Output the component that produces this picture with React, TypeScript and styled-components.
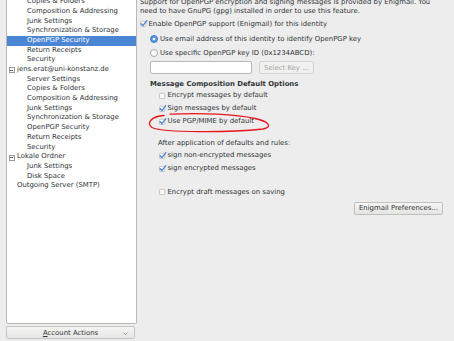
import React from "react";
import styled, { createGlobalStyle } from "styled-components";

const GlobalStyle = createGlobalStyle`
	html, body {
		margin: 0;
		padding: 0;
		background: #ededed;
	}
	body {
		font-family: "DejaVu Sans", "Liberation Sans", sans-serif;
		font-size: 6.9px;
		color: #2e3436;
	}
`;

type Node = { label: string; level: number; selected?: boolean; expander?: boolean };

const tree: Node[] = [
	{ label: "Copies & Folders", level: 1 },
	{ label: "Composition & Addressing", level: 1 },
	{ label: "Junk Settings", level: 1 },
	{ label: "Synchronization & Storage", level: 1 },
	{ label: "OpenPGP Security", level: 1, selected: true },
	{ label: "Return Receipts", level: 1 },
	{ label: "Security", level: 1 },
	{ label: "jens.erat@uni-konstanz.de", level: 0, expander: true },
	{ label: "Server Settings", level: 1 },
	{ label: "Copies & Folders", level: 1 },
	{ label: "Composition & Addressing", level: 1 },
	{ label: "Junk Settings", level: 1 },
	{ label: "Synchronization & Storage", level: 1 },
	{ label: "OpenPGP Security", level: 1 },
	{ label: "Return Receipts", level: 1 },
	{ label: "Security", level: 1 },
	{ label: "Lokale Ordner", level: 0, expander: true },
	{ label: "Junk Settings", level: 1 },
	{ label: "Disk Space", level: 1 },
	{ label: "Outgoing Server (SMTP)", level: 0 },
];

const App = () => {
	return (
		<>
			<GlobalStyle />
			<Window>
				<Sidebar>
					<TreeBox>
						<TreeList>
							{tree.map((n, i) => (
								<TreeRow key={i} $level={n.level} $selected={!!n.selected}>
									{n.expander && <Expander />}
									{n.label}
								</TreeRow>
							))}
						</TreeList>
					</TreeBox>
					<ActionsButton>
						<span>
							<u>A</u>ccount Actions
						</span>
						<Chevron viewBox='0 0 6 4'>
							<path d='M0.8 0.8 L3 3 L5.2 0.8' />
						</Chevron>
					</ActionsButton>
				</Sidebar>

				<Content>
					<Para>
						Support for OpenPGP encryption and signing messages is provided by Enigmail. You
						<br />
						need to have GnuPG (gpg) installed in order to use this feature.
					</Para>

					<Option $top={2.5} $indent={0}>
						<CheckBox checked />
						Enable OpenPGP support (Enigmail) for this identity
					</Option>

					<Option $top={4.5} $indent={10}>
						<Radio $on />
						Use email address of this identity to identify OpenPGP key
					</Option>
					<Option $top={2.5} $indent={10}>
						<Radio />
						Use specific OpenPGP key ID (0x1234ABCD):
					</Option>

					<KeyRow>
						<KeyInput />
						<PushButton $disabled>Select Key ...</PushButton>
					</KeyRow>

					<Heading>Message Composition Default Options</Heading>

					<Option $top={0} $indent={19}>
						<CheckBox />
						Encrypt messages by default
					</Option>
					<Option $top={2} $indent={19}>
						<CheckBox checked />
						Sign messages by default
					</Option>
					<Option $top={2} $indent={19}>
						<CheckBox checked />
						Use PGP/MIME by default
					</Option>

					<Option $top={11} $indent={18}>
						After application of defaults and rules:
					</Option>
					<Option $top={1} $indent={19}>
						<CheckBox checked />
						sign non-encrypted messages
					</Option>
					<Option $top={2} $indent={19}>
						<CheckBox checked />
						sign encrypted messages
					</Option>

					<Option $top={12.5} $indent={19}>
						<CheckBox />
						Encrypt draft messages on saving
					</Option>

					<ButtonRow>
						<PushButton>Enigmail Preferences...</PushButton>
					</ButtonRow>

					{/* red hand-drawn annotation around the PGP/MIME option */}
					<Scribble viewBox='0 0 135 28'>
						<path d='M24 7.5 C11 8.5, 6 15, 12 19.5 C24 25, 90 24.5, 123 21 C133 19, 129 13.5, 115 10.5 C96 6.5, 62 4.5, 30 6.2' />
					</Scribble>
				</Content>
			</Window>
		</>
	);
};

const CheckBox = ({ checked }: { checked?: boolean }) => (
	<Box viewBox='0 0 9 8'>
		<rect x='0.5' y='1.5' width='6' height='6' rx='1' />
		{checked && <path d='M1.3 4.3 L3.2 6.4 L7.8 0.8' />}
	</Box>
);

export default App;

const Window = styled.div`
	display: flex;
	width: 454px;
	height: 341px;
	overflow: hidden;
	background: #ededed;
`;

const Sidebar = styled.div`
	width: 137px;
	flex: none;
	padding: 0 0 2px 6px;
	box-sizing: border-box;
	display: flex;
	flex-direction: column;
`;

const TreeBox = styled.div`
	flex: 1;
	background: #fff;
	border: 1px solid #b9b9b6;
	border-top: none;
	border-radius: 0 0 2px 2px;
	overflow: hidden;
`;

const TreeList = styled.div`
	margin-top: -2.8px;
`;

const TreeRow = styled.div<{ $level: number; $selected: boolean }>`
	height: 9.7px;
	line-height: 9.7px;
	display: flex;
	align-items: center;
	white-space: nowrap;
	padding-left: ${(p) => (p.$level === 0 ? 10 : 20)}px;
	background: ${(p) => (p.$selected ? "#4a86d4" : "transparent")};
	color: ${(p) => (p.$selected ? "#fff" : "#2e3436")};
	position: relative;
`;

const Expander = styled.span`
	position: absolute;
	left: 1.5px;
	top: 2.3px;
	width: 4px;
	height: 4px;
	border: 0.8px solid #9a9a9a;
	&::after {
		content: "";
		position: absolute;
		left: 0.8px;
		right: 0.8px;
		top: 1.6px;
		height: 0.8px;
		background: #666;
	}
`;

const ActionsButton = styled.div`
	margin-top: 2px;
	height: 13px;
	width: 129px;
	box-sizing: border-box;
	border: 1px solid #c3c3c0;
	border-radius: 2px;
	background: linear-gradient(#f4f4f3, #e6e6e4);
	display: flex;
	align-items: center;
	justify-content: center;
	position: relative;
	color: #2e3436;
	u {
		text-decoration-thickness: 0.6px;
		text-underline-offset: 1px;
	}
`;

const Chevron = styled.svg`
	position: absolute;
	right: 6px;
	top: 4.5px;
	width: 5px;
	height: 3.5px;
	path {
		fill: none;
		stroke: #777;
		stroke-width: 0.9;
	}
`;

const Content = styled.div`
	flex: 1;
	padding-left: 3px;
	position: relative;
	display: flex;
	flex-direction: column;
`;

const Para = styled.div`
	margin-top: -2.5px;
	line-height: 9px;
	white-space: nowrap;
`;

const Option = styled.div<{ $top: number; $indent: number }>`
	margin-top: ${(p) => p.$top}px;
	margin-left: ${(p) => p.$indent}px;
	height: 11px;
	display: flex;
	align-items: center;
	white-space: nowrap;
`;

const Box = styled.svg`
	width: 8px;
	height: 7px;
	margin-right: 0.5px;
	flex: none;
	rect {
		fill: #fafafa;
		stroke: #a9a9a7;
		stroke-width: 0.7;
	}
	path {
		fill: none;
		stroke: #3c7fd8;
		stroke-width: 1.4;
		stroke-linecap: round;
		stroke-linejoin: round;
	}
`;

const Radio = styled.span<{ $on?: boolean }>`
	width: 6px;
	height: 6px;
	border-radius: 50%;
	flex: none;
	margin-right: 2px;
	border: 0.7px solid ${(p) => (p.$on ? "#3a78c9" : "#a9a9a7")};
	background: ${(p) =>
		p.$on
			? "radial-gradient(circle at 50% 50%, #ffffff 0 1.1px, #6aa3e6 1.6px, #3a7ad2 100%)"
			: "#fafafa"};
`;

const KeyRow = styled.div`
	margin-top: 3px;
	margin-left: 10px;
	height: 13px;
	display: flex;
	gap: 7px;
`;

const KeyInput = styled.div`
	width: 102px;
	box-sizing: border-box;
	border: 1px solid #b8b8b5;
	border-radius: 2px;
	background: #fff;
`;

const PushButton = styled.div<{ $disabled?: boolean }>`
	box-sizing: border-box;
	height: 13px;
	padding: 0 4px;
	display: flex;
	align-items: center;
	justify-content: center;
	white-space: nowrap;
	border: 1px solid ${(p) => (p.$disabled ? "#d3d3d0" : "#c0c0bd")};
	border-radius: 2px;
	background: ${(p) => (p.$disabled ? "#f0f0ef" : "linear-gradient(#f6f6f5, #e4e4e2)")};
	color: ${(p) => (p.$disabled ? "#a5a7a5" : "#2e3436")};
`;

const Heading = styled.div`
	margin-top: 4.5px;
	margin-left: 10px;
	height: 11px;
	line-height: 11px;
	font-weight: bold;
	white-space: nowrap;
`;

const ButtonRow = styled.div`
	margin-top: 5px;
	display: flex;
	justify-content: flex-end;
	padding-right: 11px;
	${PushButton} {
		height: 12.5px;
		padding: 0 4px;
	}
`;

const Scribble = styled.svg`
	position: absolute;
	left: 3px;
	top: 108px;
	width: 135px;
	height: 28px;
	overflow: visible;
	pointer-events: none;
	path {
		fill: none;
		stroke: #e8131b;
		stroke-width: 1.3;
		stroke-linecap: round;
	}
`;
